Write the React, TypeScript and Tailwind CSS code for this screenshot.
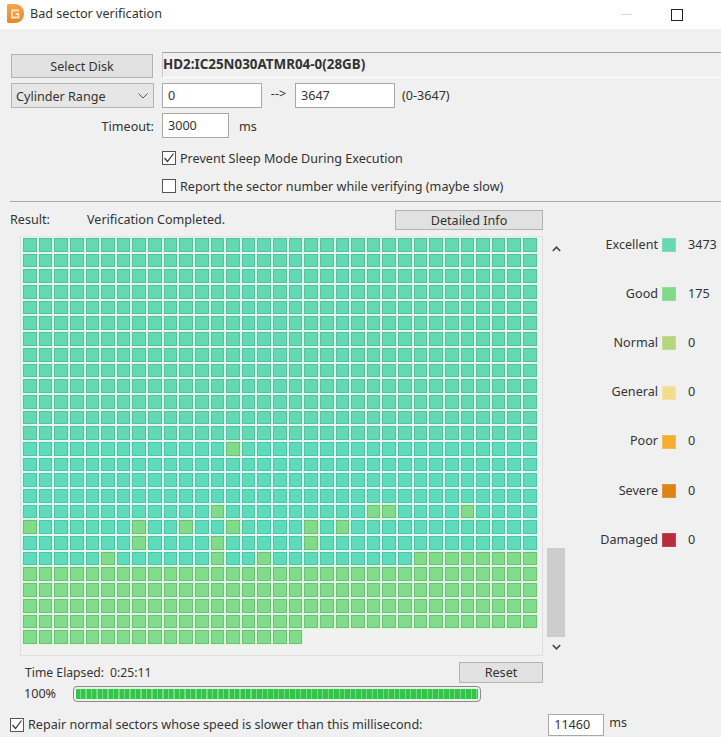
import React from 'react';

const GOOD_CELLS: Record<number, number[]> = {
  13: [13],
  17: [12, 22, 23, 28],
  18: [0, 7, 10, 13, 18, 20],
  19: [7, 12, 18],
  20: [5, 12, 15, 25, 26, 27, 28, 29, 30, 31, 32],
};

const LEGEND = [
  { label: 'Excellent', count: '3473', swatch: 'bg-[#66d8b2] border-[#7fdcc0]' },
  { label: 'Good', count: '175', swatch: 'bg-[#82d98c] border-[#90dc98]' },
  { label: 'Normal', count: '0', swatch: 'bg-[#b5d77c] border-[#c3dc94]' },
  { label: 'General', count: '0', swatch: 'bg-[#f0de8c] border-[#f2e4a6]' },
  { label: 'Poor', count: '0', swatch: 'bg-[#f3ae2f] border-[#f5bb55]' },
  { label: 'Severe', count: '0', swatch: 'bg-[#dc8516] border-[#e0953a]' },
  { label: 'Damaged', count: '0', swatch: 'bg-[#b92c3e] border-[#c04556]' },
];

function Check() {
  return (
    <svg width="12" height="12" viewBox="0 0 12 12" fill="none" stroke="#333" strokeWidth="1.2">
      <polyline points="1.5 6 4.5 9.5 10.5 1.5" />
    </svg>
  );
}

function Checkbox({ checked }: { checked?: boolean }) {
  return (
    <span className="w-[14px] h-[14px] border border-[#555] bg-white flex items-center justify-center shrink-0">
      {checked && <Check />}
    </span>
  );
}

function Btn({ className, children }: { className: string; children: React.ReactNode }) {
  return (
    <div className={`flex items-center justify-center bg-[#e1e1e1] border border-[#b4b4b4] pt-[2px] shrink-0 ${className}`}>
      {children}
    </div>
  );
}

function Input({ className, children }: { className: string; children: React.ReactNode }) {
  return (
    <div className={`flex items-center bg-white border border-[#a8a8a8] pl-[5px] pt-[1px] shrink-0 ${className}`}>
      {children}
    </div>
  );
}

function Cell({ good, row }: { good: boolean; row: number }) {
  let color = 'bg-[#62d9b1] border-[#58bfa0] ring-[#dcf9ef]';
  if (good) color = 'bg-[#80dc8a] border-[#6ec078] ring-[#dcf7de]';
  else if (row >= 13) color = 'bg-[#5edbba] border-[#54c0a6] ring-[#d8fbf4]';
  return <div className={`border ring-1 ${color}`} />;
}

function SectorGrid() {
  const cells = [];
  for (let row = 0; row < 26; row++) {
    const cols = row === 25 ? 18 : 33;
    for (let col = 0; col < cols; col++) {
      const good = row >= 21 || (GOOD_CELLS[row] || []).includes(col);
      cells.push(<Cell key={`${row}-${col}`} good={good} row={row} />);
    }
  }
  return (
    <div className="w-[523px] h-[420px] border border-[#dedede] border-t-[#e4e4e4] bg-[#f1f1f1] pl-[2px] pt-[1px] shrink-0">
      <div className="grid grid-cols-[repeat(33,13.64px)] auto-rows-[13.7px] gap-[2px]">{cells}</div>
    </div>
  );
}

export default function App() {
  return (
    <div
      className="w-[721px] h-[737px] overflow-hidden flex flex-col bg-[#f0f0f0] text-[#333] text-[12.6px] leading-none"
      style={{ fontFamily: '"Noto Sans", "Open Sans", sans-serif' }}
    >
      {/* title bar */}
      <div className="h-[29px] bg-white flex items-center pl-[7px] shrink-0">
        <svg width="17" height="19" viewBox="0 0 17 19" className="mr-[6px] -mt-[2px]">
          <defs>
            <linearGradient id="logo" x1="0" y1="0" x2="0" y2="1">
              <stop offset="0" stopColor="#f6a64a" />
              <stop offset="1" stopColor="#e8852c" />
            </linearGradient>
          </defs>
          <path d="M0 1.5C0 .7.7 0 1.5 0H8C13 0 17 4 17 9.5S13 19 8 19H1.5C.7 19 0 18.3 0 17.5Z" fill="url(#logo)" />
          <path d="M12 6.5H5V13.5H11.5V10H8.5" fill="none" stroke="#fbe3c8" strokeWidth="1.8" />
        </svg>
        <span>Bad sector verification</span>
        <div className="ml-auto w-[11px] h-[1px] bg-[#d8d8d8] mr-[39px]" />
        <div className="w-[12px] h-[12px] border border-[#222] mr-[38px]" />
      </div>

      {/* disk row */}
      <div className="flex mt-[23px] ml-[11px]">
        <Btn className="w-[142px] h-[24px] mt-[2px]">Select Disk</Btn>
        <div className="ml-[9px] flex-1 h-[26px] border-t border-l border-t-[#a0a0a0] border-l-[#c8c8c8] border-b border-b-white flex items-center font-bold text-[13.4px]">
          HD2:IC25N030ATMR04-0(28GB)
        </div>
      </div>

      {/* range row */}
      <div className="flex items-center mt-[5px] ml-[11px] h-[25px]">
        <div className="w-[143px] h-[25px] bg-[#e6e6e6] border border-[#b4b4b4] flex items-center pl-[4px] pr-[5px] justify-between shrink-0">
          <span className="pt-[3px]">Cylinder Range</span>
          <svg width="10" height="6" viewBox="0 0 10 6" fill="none" stroke="#555" strokeWidth="1">
            <polyline points="0.5 0.5 5 5 9.5 0.5" />
          </svg>
        </div>
        <Input className="w-[100px] h-[25px] ml-[8px]">0</Input>
        <span className="w-[33px] text-center -mt-[2px] shrink-0">--&gt;</span>
        <Input className="w-[100px] h-[25px]">3647</Input>
        <span className="ml-[7px] pt-[2px]">(0-3647)</span>
      </div>

      {/* timeout row */}
      <div className="flex items-center mt-[5px] h-[25px]">
        <span className="w-[154px] text-right shrink-0 pt-[3px]">Timeout:</span>
        <Input className="w-[67px] h-[25px] ml-[8px]">3000</Input>
        <span className="ml-[10px] pt-[3px]">ms</span>
      </div>

      {/* options */}
      <div className="flex items-center ml-[162px] mt-[13px] h-[14px]">
        <Checkbox checked />
        <span className="ml-[4px] pt-[2px]">Prevent Sleep Mode During Execution</span>
      </div>
      <div className="flex items-center ml-[162px] mt-[14px] h-[14px]">
        <Checkbox />
        <span className="ml-[4px] pt-[2px]">Report the sector number while verifying (maybe slow)</span>
      </div>

      <div className="ml-[10px] mt-[8px] h-[1px] bg-[#a8a8a8] shrink-0" />

      {/* result header */}
      <div className="flex items-center ml-[10px] mt-[8px] h-[20px]">
        <span className="w-[77px] shrink-0">Result:</span>
        <span>Verification Completed.</span>
        <Btn className="w-[148px] h-[20px] ml-auto mr-[178px]">Detailed Info</Btn>
      </div>

      {/* grid, scrollbar, legend */}
      <div className="flex ml-[20px] mt-[6px] h-[420px]">
        <SectorGrid />
        <div className="w-[18px] ml-[4px] flex flex-col items-center shrink-0">
          <svg width="9" height="6" viewBox="0 0 9 6" fill="none" stroke="#444" strokeWidth="1.6" className="mt-[10px]">
            <polyline points="0.8 5 4.5 1.2 8.2 5" />
          </svg>
          <div className="w-[18px] h-[89px] bg-[#cdcdcd] mt-[296px]" />
          <svg width="9" height="6" viewBox="0 0 9 6" fill="none" stroke="#444" strokeWidth="1.6" className="mt-[7px]">
            <polyline points="0.8 1 4.5 4.8 8.2 1" />
          </svg>
        </div>
        <div className="flex flex-col gap-[35.2px] mt-[2px]">
          {LEGEND.map((item) => (
            <div key={item.label} className="flex items-center h-[14px]">
              <span className="w-[93px] text-right shrink-0">{item.label}</span>
              <span className={`w-[14px] h-[14px] border ml-[4px] shrink-0 ${item.swatch}`} />
              <span className="ml-[12px]">{item.count}</span>
            </div>
          ))}
        </div>
      </div>

      {/* elapsed */}
      <div className="flex items-center ml-[25px] mt-[6px] h-[21px]">
        <span className="text-[12.2px] pt-[2px]">Time Elapsed:</span>
        <span className="ml-[6px] text-[12.2px] pt-[2px]">0:25:11</span>
        <Btn className="w-[84px] h-[21px] ml-auto mr-[178px]">Reset</Btn>
      </div>

      {/* progress */}
      <div className="flex items-center ml-[24px] mt-[3px] h-[16px]">
        <span className="w-[49px] shrink-0">100%</span>
        <div className="w-[408px] h-[16px] border border-[#8a8a8a] rounded-[4px] bg-[#eaf5ea] p-[2px] shrink-0">
          <div className="h-full rounded-[1px] bg-[repeating-linear-gradient(90deg,#32c648_0,#32c648_4px,#74da84_4px,#74da84_5.5px)]" />
        </div>
      </div>

      {/* repair */}
      <div className="flex items-center ml-[10px] mt-[12px] h-[22px]">
        <Checkbox checked />
        <span className="ml-[4px]">Repair normal sectors whose speed is slower than this millisecond:</span>
        <Input className="w-[56px] h-[22px] ml-auto">11460</Input>
        <span className="ml-[5px] mr-[94px] -mt-[3px]">ms</span>
      </div>
    </div>
  );
}
